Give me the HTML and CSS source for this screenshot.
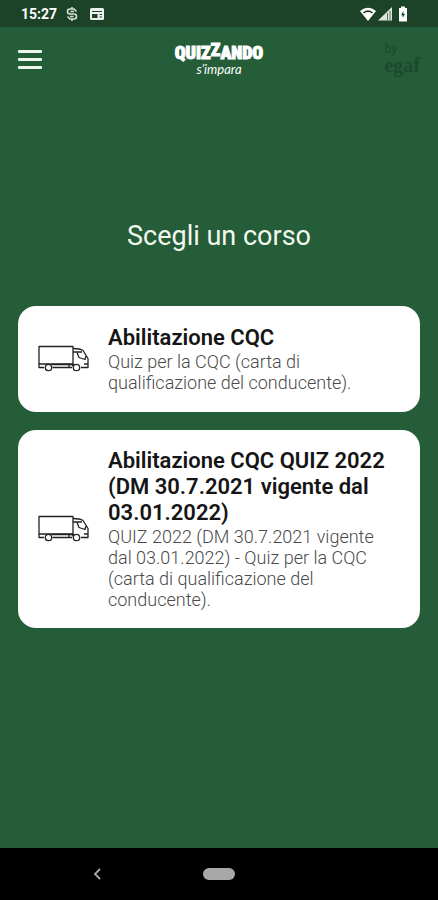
FILE: index.html
```
<!DOCTYPE html>
<html lang="it">
<head>
<meta charset="utf-8">
<meta name="viewport" content="width=device-width, initial-scale=1">
<title>Quizzando</title>
<link rel="stylesheet" href="styles.css">
</head>
<body>
<svg class="defs" aria-hidden="true">
  <symbol id="truck" viewBox="0 0 52 28">
    <g fill="none" stroke="#222" stroke-width="1.3" stroke-linejoin="round">
      <path d="M1 1.500H35V19H1z"/>
      <path d="M1 19v3.500H6M14.500 22.500H34M14 19.500H35M43 22.500H50V13.500L45 5.500Q42 3.500 35 3.500M35 7H44"/>
      <path d="M39 7.500L41 12.500 47 14.500 48 11M46 19H50M36 19L34 21M31 19v3"/>
      <circle cx="10.500" cy="22.500" r="3.200"/>
      <circle cx="38.500" cy="22.500" r="3.200"/>
    </g>
  </symbol>
</svg>
<div class="screen">
  <div class="status">
    <span class="clock">15:27</span>
    <svg class="status-icon" viewBox="0 0 14 16"><path d="M11.500 5.500L9 3H5Q2.500 3 2.500 5.500T5 8H9Q11.500 8 11.500 10.500T9 13H5L2.500 10.500M7 1v2M7 13v2M5.500 5.500H9M5 10.500H8.500" fill="none" stroke="#d5e0d8" stroke-width="1.600"/></svg>
    <svg class="status-icon news" viewBox="0 0 16 16"><rect x="1" y="2" width="14" height="12" rx="1.500" fill="#edf2ee"/><path d="M3 5.500H13M10.500 8.500H13M10.500 11H13" stroke="#1c4228" stroke-width="1.200"/><path d="M3 8H8.500V12H3z" fill="#1c4228"/></svg>
    <div class="system">
      <svg class="wifi" viewBox="0 0 18 16"><path d="M1 5Q9-1.500 17 5L9 15z" fill="#fff"/><path d="M4.500 6.800Q9 3.500 13.500 6.800" fill="none" stroke="#1c4228" stroke-width="1.600"/></svg>
      <svg class="signal" viewBox="0 0 16 16"><path d="M1 14.500L15 1V14.500z" fill="#dce5de"/><path d="M10.500 7V14M13 5V14" stroke="#547060" stroke-width="1"/></svg>
      <svg class="battery" viewBox="0 0 10 16"><path d="M3 .5H7V2H9V15.500H1V2H3z" fill="#fff"/><path d="M5.500 5L3 9.200H4.700V12L7 8H5.500z" fill="#1c4228"/></svg>
    </div>
  </div>
  <header class="header">
    <button class="menu" type="button" aria-label="Menu"><span></span><span></span><span></span></button>
    <div class="brand">
      <span class="brand-name">QUIZ<span class="raised">Z</span>ANDO</span>
      <span class="brand-tag">s’impara</span>
    </div>
    <div class="partner"><span class="by">by</span><span class="egaf">egaf</span></div>
  </header>
  <main class="content">
    <h1>Scegli un corso</h1>
    <button class="card" type="button">
      <svg class="truck" aria-hidden="true"><use href="#truck"/></svg>
      <span class="text">
        <span class="card-title">Abilitazione CQC</span>
        <span class="card-desc">Quiz per la CQC (carta di qualificazione del conducente).</span>
      </span>
    </button>
    <button class="card" type="button">
      <svg class="truck" aria-hidden="true"><use href="#truck"/></svg>
      <span class="text">
        <span class="card-title">Abilitazione CQC QUIZ 2022 (DM 30.7.2021 vigente dal 03.01.2022)</span>
        <span class="card-desc">QUIZ 2022 (DM 30.7.2021 vigente dal 03.01.2022) - Quiz per la CQC (carta di qualificazione del conducente).</span>
      </span>
    </button>
  </main>
  <nav class="navbar">
    <button class="back" type="button" aria-label="Indietro"><svg viewBox="0 0 8 12"><path d="M7 1L2 6L7 11" fill="none" stroke="#a8a8a8" stroke-width="1.800"/></svg></button>
    <button class="home" type="button" aria-label="Home"></button>
  </nav>
</div>
</body>
</html>
```
FILE: styles.css
```
* { box-sizing: border-box; }
body { margin: 0; font-family: Roboto, sans-serif; background: #245d38; }
button { border: 0; padding: 0; background: none; font: inherit; color: inherit; cursor: pointer; }
.defs { position: absolute; width: 0; height: 0; }
.screen { min-height: 100vh; display: flex; flex-direction: column; }

.status { height: 27px; padding: 0 30px 0 21px; display: flex; align-items: center; background: #1c4228; color: #fff; }
.clock { font-size: 14px; font-weight: 700; }
.status-icon { width: 14px; height: 16px; margin-left: 8px; }
.news { width: 16px; margin-left: 10px; }
.system { display: flex; align-items: center; margin-left: auto; }
.wifi { width: 18px; height: 16px; }
.signal { width: 16px; height: 16px; }
.battery { width: 10px; height: 16px; margin-left: 5px; }

.header { height: 64px; padding: 0 18px; display: grid; grid-template-columns: 1fr auto 1fr; align-items: center; color: #fff; }
.menu { width: 24px; display: flex; flex-direction: column; gap: 5px; }
.menu span { height: 3px; border-radius: 1px; background: #edf5ec; }
.brand { display: flex; flex-direction: column; align-items: center; }
.brand-name { font-family: "Liberation Sans Narrow", "Roboto Condensed", Lato, sans-serif; font-weight: 900; font-size: 18px; line-height: 20px; -webkit-text-stroke: 1px #fff; }
.raised { position: relative; top: -3px; }
.brand-tag { font-family: Lato, sans-serif; font-style: italic; font-weight: 400; font-size: 13px; line-height: 12px; }
.partner { justify-self: end; display: flex; flex-direction: column; color: #1c4a2c; }
.by { font-size: 12px; line-height: 12px; }
.egaf { font-family: "Liberation Serif", serif; font-weight: 700; font-size: 20px; line-height: 20px; }

.content { flex: 1; padding: 0 18px; display: flex; flex-direction: column; gap: 18px; }
h1 { margin: 129px 0 36px; font-size: 27px; line-height: 32px; font-weight: 400; text-align: center; color: #f2f8ee; }
.card { min-height: 106px; padding: 18px 20px; display: flex; align-items: center; gap: 18px; border-radius: 18px; background: #fff; text-align: left; }
.truck { flex: none; width: 52px; height: 28px; }
.text { flex: 1; }
.card-title, .card-desc { display: block; }
.card-title { font-size: 22px; line-height: 26px; font-weight: 600; color: #151515; }
.card-desc { font-size: 18px; line-height: 21px; font-weight: 300; color: #4a4a4a; }

.navbar { height: 52px; display: grid; grid-template-columns: 1fr auto 1fr; align-items: center; background: #000; }
.back { justify-self: center; width: 8px; height: 12px; margin-right: 10px; }
.back svg { display: block; }
.home { width: 32px; height: 12px; border-radius: 6px; background: #a8a8a8; }
```
